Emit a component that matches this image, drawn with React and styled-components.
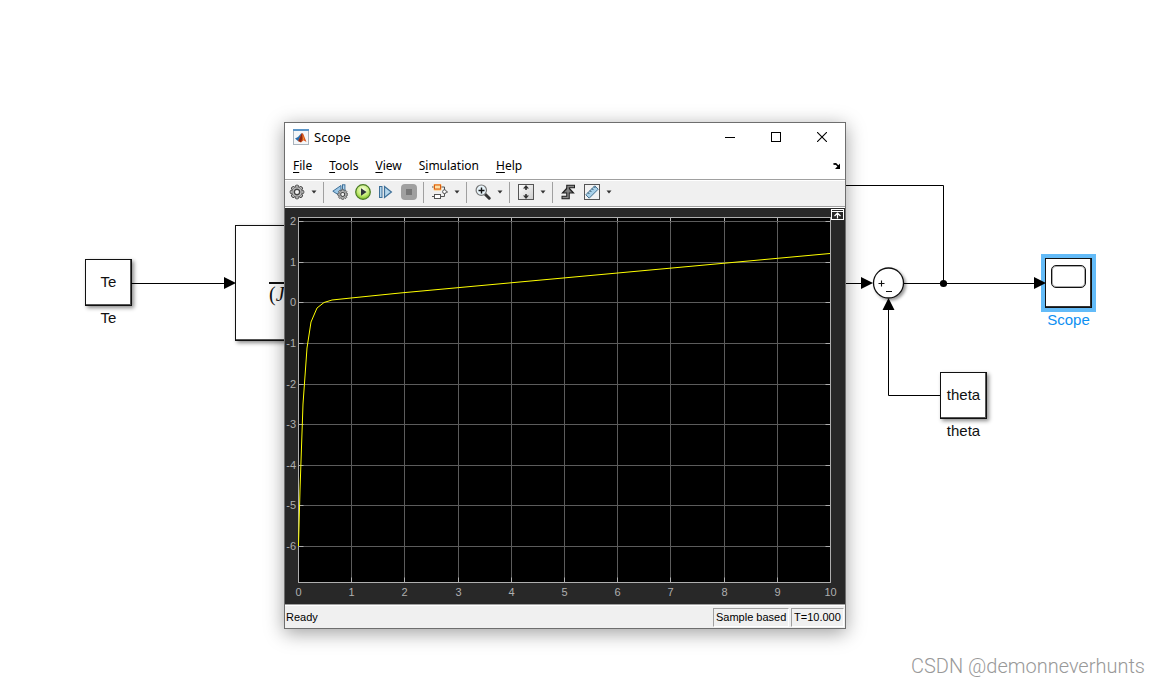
import React from 'react';
import styled, { createGlobalStyle } from 'styled-components';

const GlobalStyle = createGlobalStyle`
  * { box-sizing: border-box; }
  body {
    margin: 0;
    background: #fff;
    font-family: "Liberation Sans", Arial, sans-serif;
  }
`;

const Canvas = styled.main`
  position: relative;
  min-height: 100vh;
  overflow: hidden;
  background: #fff;
`;

const Wires = styled.svg`
  position: absolute;
  left: 0;
  top: 0;
  overflow: visible;
`;

const Node = styled.div`
  position: absolute;
  left: ${props => props.$x}px;
  top: ${props => props.$y}px;
  display: flex;
  flex-direction: column;
  align-items: center;
  gap: 3px;
  font-size: 15px;
  line-height: 17px;
  color: ${props => props.$color || '#111'};
`;

const Block = styled.div`
  display: flex;
  align-items: center;
  justify-content: center;
  width: 47px;
  height: ${props => props.$height || 47}px;
  padding-bottom: 2px;
  border: 1px solid #111;
  background: #fff;
  color: #111;
  box-shadow: ${props => (props.$selected
    ? 'inset -1px -1px 0 #333, 0 0 0 4px #63bbf8'
    : 'inset -1px -1px 0 #555, 2px 2px 4px rgba(0, 0, 0, 0.45)')};
`;

const ScopeScreen = styled.div`
  width: 35px;
  height: 23px;
  margin-bottom: 12px;
  border: 1px solid #111;
  border-radius: 5px;
  box-shadow: inset 0 0 0 1px #aaa;
`;

const TransferBlock = styled(Block)`
  width: 110px;
  height: 116px;
  justify-content: flex-start;
  padding: 20px 0 0 33px;
  font: italic 20px/20px "Liberation Serif", serif;
`;

const Denominator = styled.span`
  width: 60px;
  border-top: 2px solid #111;
`;

const Upright = styled.span`
  font-style: normal;
`;

const Window = styled.section`
  position: absolute;
  left: 284px;
  top: 122px;
  width: 562px;
  border: 1px solid #6e6e6e;
  background: #fff;
  box-shadow: 0 4px 18px rgba(0, 0, 0, 0.38);
`;

const TitleBar = styled.header`
  display: flex;
  align-items: center;
  height: 28px;
  padding-left: 8px;
`;

const Title = styled.h1`
  flex: 1;
  margin: 0 0 0 5px;
  font: 400 13px/20px "Noto Sans", sans-serif;
  color: #000;
`;

const PlainButton = styled.button`
  display: flex;
  align-items: center;
  justify-content: center;
  padding: 0;
  border: 0;
  background: transparent;
  color: #000;
`;

const CaptionButton = styled(PlainButton)`
  width: 46px;
  height: 28px;
`;

const MenuBar = styled.nav`
  display: flex;
  align-items: center;
  gap: 17px;
  height: 28px;
  padding: 2px 4px 0 8px;
`;

const MenuItem = styled(PlainButton)`
  display: block;
  font: 400 12px/20px "Noto Sans", sans-serif;
`;

const Mnemonic = styled.span`
  text-decoration: underline;
  text-underline-offset: 2px;
`;

const DockButton = styled(PlainButton)`
  margin-left: auto;
`;

const Toolbar = styled.div`
  display: flex;
  align-items: center;
  height: 29px;
  padding: 0 4px 3px;
  border-top: 1px solid #a0a0a0;
  border-bottom: 1px solid #fff;
  background: #f0f0f0;
  box-shadow: inset 0 1px 0 #fff, inset 0 -1px 0 #a0a0a0;
`;

const ToolGroup = styled.div`
  display: flex;
  gap: 7px;
  padding-right: ${props => (props.$tail ? 6 : 0)}px;
`;

const ToolPair = styled.div`
  display: flex;
`;

const ToolButton = styled(PlainButton)`
  width: 16px;
  height: 20px;
`;

const CaretButton = styled(PlainButton)`
  width: 18px;
  height: 20px;
`;

const Separator = styled.div`
  width: 1px;
  height: 21px;
  margin-right: 8px;
  background: #a0a0a0;
`;

const PlotArea = styled.div`
  position: relative;
  background: #282828;
`;

const Plot = styled.svg`
  display: block;
  width: 100%;
  height: auto;
  font-family: "Liberation Sans", Arial, sans-serif;
  font-size: 11px;
  fill: #afafaf;
`;

const RestoreButton = styled(PlainButton)`
  position: absolute;
  right: 1px;
  top: 1px;
`;

const StatusBar = styled.footer`
  display: flex;
  align-items: center;
  gap: 2px;
  height: 24px;
  padding: 1px 1px 0;
  border-top: 1px solid #a0a0a0;
  background: #f0f0f0;
  box-shadow: inset 0 1px 0 #fff;
  font-size: 11px;
  line-height: 16px;
  color: #000;
`;

const StatusText = styled.span`
  flex: 1;
`;

const StatusCell = styled.span`
  width: ${props => props.$width}px;
  height: 19px;
  padding-left: 2px;
  border: 1px solid;
  border-color: #a0a0a0 #fff #fff #a0a0a0;
  white-space: nowrap;
`;

const Watermark = styled.p`
  position: absolute;
  right: 15px;
  bottom: 4px;
  margin: 0;
  font-family: Roboto, sans-serif;
  font-size: 20px;
  font-weight: 300;
  line-height: 24px;
  color: #999;
`;

const GEAR_ANGLES = [0, 45, 90, 135, 180, 225, 270, 315];

const Gear = ({ cx, cy, scale = 1 }) => (
  <g transform={`translate(${cx} ${cy}) scale(${scale})`}>
    {GEAR_ANGLES.map(a => (
      <rect key={a} x="-1.6" y="-6.8" width="3.2" height="3.6" rx="1" fill="#c4c4c4" stroke="#444" strokeWidth="1" transform={`rotate(${a})`} />
    ))}
    <circle r="5" fill="#c4c4c4" stroke="#666" strokeWidth="0.7" />
    <circle r="2.7" fill="#f4f4f4" stroke="#444" strokeWidth="1.4" />
  </g>
);

const Icon = ({ children }) => (
  <svg width="16" height="16" viewBox="0 0 16 16" aria-hidden="true">{children}</svg>
);

const icons = {
  settings: <Icon><Gear cx={8} cy={8} /></Icon>,
  stepOptions: (
    <Icon>
      <path d="M9 1.5 0.8 7.2 9 12.5Z" fill="#9cc7e6" stroke="#3d6f98" />
      <rect x="10.5" y="0.8" width="2.4" height="8" fill="#b5d8ef" stroke="#3d6f98" />
      <Gear cx={10.7} cy={10.4} scale={0.74} />
    </Icon>
  ),
  run: (
    <Icon>
      <defs>
        <radialGradient id="runFill" cx="0.5" cy="0.35" r="0.65">
          <stop offset="0" stopColor="#fbffe9" />
          <stop offset="0.6" stopColor="#c5ec76" />
          <stop offset="1" stopColor="#79bd22" />
        </radialGradient>
      </defs>
      <circle cx="8" cy="8" r="7.3" fill="url(#runFill)" stroke="#4a7a25" strokeWidth="1.2" />
      <path d="M6 4.2 11.5 8 6 11.8Z" fill="#2d3338" />
    </Icon>
  ),
  stepForward: (
    <Icon>
      <rect x="1.5" y="2.5" width="2.5" height="11" fill="#b4d6ec" stroke="#3d6f98" />
      <path d="M6.5 2.6v10.8L13.4 8Z" fill="#b4d6ec" stroke="#3d6f98" strokeWidth="1.2" />
    </Icon>
  ),
  stop: (
    <Icon>
      <rect width="16" height="16" rx="4" fill="#a0a0a0" />
      <rect x="5" y="5" width="6" height="6" fill="#777" />
    </Icon>
  ),
  signals: (
    <Icon>
      <path d="M8 3h4.5v3M12.5 9v3.5H8M0 3h3M0 12.5h3M14 8h2" fill="none" stroke="#555" />
      <rect x="1.5" y="0" width="8" height="6.5" rx="1" fill="#ffc36a" />
      <rect x="2.5" y="1" width="6" height="4" fill="#ffe0a3" stroke="#d95b12" />
      <rect x="2.5" y="10.5" width="6" height="4" fill="#fff" stroke="#555" />
      <circle cx="12.5" cy="7.7" r="1.9" fill="#fff" stroke="#555" />
    </Icon>
  ),
  zoom: (
    <Icon>
      <path d="m10.2 10.2 4 4" stroke="#333" strokeWidth="3" strokeLinecap="round" />
      <circle cx="6.3" cy="6.2" r="5.2" fill="#e8f4fa" stroke="#777" strokeWidth="1.2" />
      <path d="M3.5 6.5h6M6.5 3.5v6" stroke="#111" strokeWidth="1.4" />
    </Icon>
  ),
  fit: (
    <Icon>
      <defs>
        <linearGradient id="fitFill" x1="0" y1="0" x2="1" y2="1">
          <stop offset="0" stopColor="#fff" />
          <stop offset="1" stopColor="#ccc" />
        </linearGradient>
      </defs>
      <rect x="0.5" y="0.5" width="15" height="15" fill="url(#fitFill)" stroke="#555" />
      <path d="M8 1 11 4.5H5ZM8 15l3-3.5H5Z" fill="#333" />
      <path d="M8 4v2M8 10v2" stroke="#333" strokeWidth="1.6" />
    </Icon>
  ),
  trigger: (
    <Icon>
      <path d="M0.5 13.5H7v-11h7" fill="none" stroke="#222" strokeWidth="3.6" />
      <path d="M7 3 12.5 9h-11Z" fill="#777" stroke="#222" strokeWidth="1.2" />
      <path d="M1.5 13.5H7v-11h6" fill="none" stroke="#888" strokeWidth="1.4" />
    </Icon>
  ),
  measure: (
    <Icon>
      <rect x="0.5" y="0.5" width="15" height="15" fill="#f2f2f2" stroke="#555" />
      <path d="M1.8 10.8 10.8 1.8l3.4 3.4-9 9Z" fill="#a9d1e9" stroke="#47718f" />
      <path d="m4 8.6 1.3 1.3M6 6.6l1.3 1.3M8 4.6l1.3 1.3M10 2.6l1.3 1.3" stroke="#24485f" />
    </Icon>
  ),
};

const Tool = ({ name, label }) => (
  <ToolButton type="button" aria-label={label}>{icons[name]}</ToolButton>
);

const ToolWithMenu = ({ name, label }) => (
  <ToolPair>
    <Tool name={name} label={label} />
    <CaretButton type="button" aria-label={`${label} menu`}>
      <svg width="6" height="4" viewBox="0 0 6 4"><path d="M0.5 0.5h5L3 3.5Z" fill="#333" /></svg>
    </CaretButton>
  </ToolPair>
);

const MatlabLogo = () => (
  <svg width="16" height="16" viewBox="0 0 16 16" aria-hidden="true">
    <rect x="0.5" y="0.5" width="15" height="15" fill="#f5f7f9" stroke="#a9b4bd" />
    <path d="M0 0h16v2H0Z" fill="#5c96c8" />
    <path d="m2 9.5 3-1.5 3.5-4 0.5 4-3.5 4.5Z" fill="#286eae" />
    <path d="M5 12 9 4l1.2.8L13.5 13l-3-1.8L8 13.5Z" fill="#d9541b" />
    <path d="M5.5 12 9 4l.5 5-1.5 4.2Z" fill="#8c2510" />
    <path d="m9.6 5.5 1.6 5-1.2.2Z" fill="#f6a13a" />
  </svg>
);

// axes box inside the 560x396 plot area
const LEFT = 13.5;
const RIGHT = 545.5;
const TOP = 9.5;
const BOTTOM = 374.5;

const X_TICKS = [0, 1, 2, 3, 4, 5, 6, 7, 8, 9, 10];
const Y_TICKS = [2, 1, 0, -1, -2, -3, -4, -5, -6];

const xPos = v => Math.floor(LEFT + v * 53.2) + 0.5;
const yPos = v => Math.floor(94.8 - v * 40.6) + 0.5;

const TRACE = '13.5,338 15,282 18,196 22,140 26,114 32,100 39,94.5 47,92 66,90 115,85 545,45.5';

const ScopePlot = () => (
  <Plot viewBox="0 0 560 396" role="img" aria-label="Scope signal over time">
    <rect x={LEFT} y={TOP} width={RIGHT - LEFT} height={BOTTOM - TOP} fill="#000" />
    {X_TICKS.map(v => (
      <g key={v}>
        <path d={`M${xPos(v)} ${TOP}V${BOTTOM}`} stroke="#5c5c5c" />
        <path d={`M${xPos(v)} ${TOP}v5M${xPos(v)} ${BOTTOM}v-5`} stroke="#afafaf" />
        <text x={xPos(v)} y="388" textAnchor="middle">{v}</text>
      </g>
    ))}
    {Y_TICKS.map(v => (
      <g key={v}>
        <path d={`M${LEFT} ${yPos(v)}H${RIGHT}`} stroke="#5c5c5c" />
        <path d={`M${LEFT} ${yPos(v)}h5M${RIGHT} ${yPos(v)}h-5`} stroke="#afafaf" />
        <text x="11" y={yPos(v) + 3.5} textAnchor="end">{v}</text>
      </g>
    ))}
    <rect x={LEFT} y={TOP} width={RIGHT - LEFT} height={BOTTOM - TOP} fill="none" stroke="#afafaf" />
    <polyline points={TRACE} fill="none" stroke="#ff0" />
  </Plot>
);

const ScopeWindow = () => (
  <Window>
    <TitleBar>
      <MatlabLogo />
      <Title>Scope</Title>
      <CaptionButton type="button" aria-label="Minimize">
        <svg width="10" height="10" viewBox="0 0 10 10"><path d="M0 5.5h10" stroke="#000" /></svg>
      </CaptionButton>
      <CaptionButton type="button" aria-label="Maximize">
        <svg width="10" height="10" viewBox="0 0 10 10"><rect x="0.5" y="0.5" width="9" height="9" fill="none" stroke="#000" /></svg>
      </CaptionButton>
      <CaptionButton type="button" aria-label="Close">
        <svg width="10" height="10" viewBox="0 0 10 10"><path d="m0 0 10 10M10 0 0 10" stroke="#000" strokeWidth="1.1" /></svg>
      </CaptionButton>
    </TitleBar>
    <MenuBar>
      <MenuItem type="button"><Mnemonic>F</Mnemonic>ile</MenuItem>
      <MenuItem type="button"><Mnemonic>T</Mnemonic>ools</MenuItem>
      <MenuItem type="button"><Mnemonic>V</Mnemonic>iew</MenuItem>
      <MenuItem type="button">S<Mnemonic>i</Mnemonic>mulation</MenuItem>
      <MenuItem type="button"><Mnemonic>H</Mnemonic>elp</MenuItem>
      <DockButton type="button" aria-label="Dock">
        <svg width="8" height="6" viewBox="0 0 8 6">
          <path d="M0.5 1.5c1-1 2.5-.8 3.3.2l1.7 1.8" fill="none" stroke="#000" strokeWidth="1.6" />
          <path d="M7 0.5V6H2Z" fill="#000" />
        </svg>
      </DockButton>
    </MenuBar>
    <Toolbar>
      <ToolWithMenu name="settings" label="Configuration properties" />
      <Separator />
      <ToolGroup $tail>
        <Tool name="stepOptions" label="Step options" />
        <Tool name="run" label="Run" />
        <Tool name="stepForward" label="Step forward" />
        <Tool name="stop" label="Stop" />
      </ToolGroup>
      <Separator />
      <ToolWithMenu name="signals" label="Highlight block" />
      <Separator />
      <ToolWithMenu name="zoom" label="Zoom" />
      <Separator />
      <ToolWithMenu name="fit" label="Scale axes" />
      <Separator />
      <ToolGroup>
        <Tool name="trigger" label="Triggers" />
        <ToolWithMenu name="measure" label="Measurements" />
      </ToolGroup>
    </Toolbar>
    <PlotArea>
      <ScopePlot />
      <RestoreButton type="button" aria-label="Maximize axes">
        <svg width="13" height="11" viewBox="0 0 13 11">
          <rect x="0.5" y="0.5" width="12" height="10" fill="#282828" stroke="#fff" />
          <path d="M1 2.5h11M6.5 9.5v-5M3.5 7l3-3 3 3" fill="none" stroke="#fff" strokeWidth="1.2" />
        </svg>
      </RestoreButton>
    </PlotArea>
    <StatusBar>
      <StatusText>Ready</StatusText>
      <StatusCell $width={76}>Sample based</StatusCell>
      <StatusCell $width={53}>T=10.000</StatusCell>
    </StatusBar>
  </Window>
);

const SignalLines = () => (
  <Wires width="1160" height="460" viewBox="0 0 1160 460" aria-hidden="true">
    <defs>
      <filter id="sumShadow" x="-30%" y="-30%" width="170%" height="170%">
        <feDropShadow dx="2" dy="2" stdDeviation="1.5" floodOpacity="0.4" />
      </filter>
    </defs>
    <path d="M131 283.5h95M840 185.5h103.5v98M840 283.5h24M904 283.5h132M940 395.5h-51.5V308" fill="none" stroke="#000" />
    <path d="m224 277 12 6-12 6ZM861 277l12 6-12 6ZM1034 277l12 6-12 6ZM882.5 310l6-12 6 12Z" />
    <circle cx="943.5" cy="283.5" r="3.6" />
    <circle cx="888.5" cy="283" r="15" fill="#fff" stroke="#111" strokeWidth="1.3" filter="url(#sumShadow)" />
    <path d="M878.5 283.5h6M881.5 280.5v6M886 291.5h6" stroke="#111" strokeWidth="1.1" />
  </Wires>
);

export default function App() {
  return (
    <>
      <GlobalStyle />
      <Canvas>
        <Node $x={85} $y={259}>
          <Block>Te</Block>
          Te
        </Node>
        <Node $x={235} $y={225}>
          <TransferBlock>
            <Denominator>
              <Upright>(</Upright>
              J
            </Denominator>
          </TransferBlock>
        </Node>
        <Node $x={1045} $y={258} $color="#0d8ff2">
          <Block $height={50} $selected><ScopeScreen /></Block>
          Scope
        </Node>
        <Node $x={940} $y={372}>
          <Block>theta</Block>
          theta
        </Node>
        <SignalLines />
        <ScopeWindow />
        <Watermark>CSDN @demonneverhunts</Watermark>
      </Canvas>
    </>
  );
}
